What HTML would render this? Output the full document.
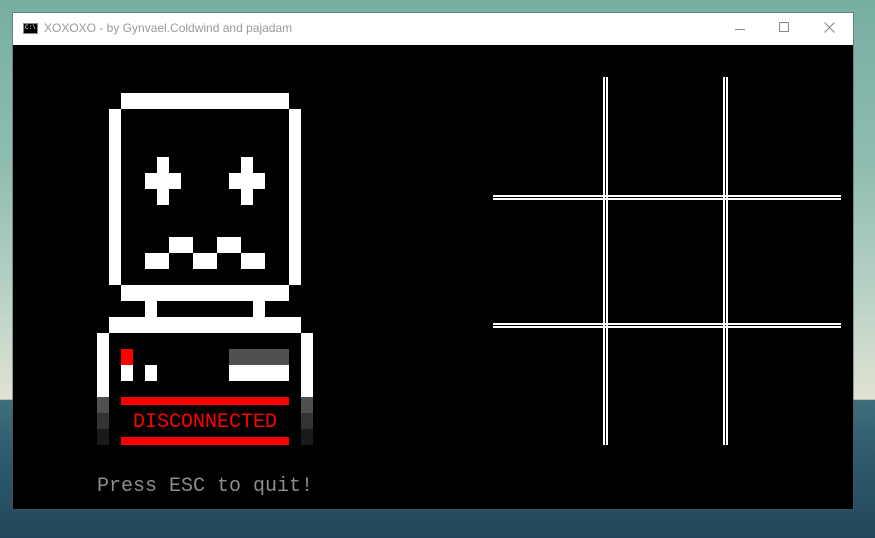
<!DOCTYPE html>
<html><head><meta charset="utf-8"><style>
html,body{margin:0;padding:0}
body{width:875px;height:538px;overflow:hidden;position:relative;
background:linear-gradient(to bottom,#78aea2 0%,#8fbcb0 30%,#b9d2c6 55%,#dfe2d2 73%,#e2e3d5 74.2%,#3f6f7c 74.4%,#2f5a6c 85%,#23475c 100%);font-family:"Liberation Sans",sans-serif}
.win{position:absolute;left:13px;top:13px;width:840px;height:496px;background:#000;box-shadow:0 0 0 1px rgba(80,80,80,.5)}
.tb{position:absolute;left:0;top:0;width:840px;height:32px;background:#fff}
.tb .t{position:absolute;left:31px;top:8px;font-size:12px;color:#999;}
.ico{position:absolute;left:10px;top:10px;width:15px;height:11px;background:#000;border:1px solid #888;box-sizing:border-box}
.ico:after{content:"C:\\";position:absolute;left:1px;top:0px;font-size:6px;color:#fff;font-family:"Liberation Mono",monospace;line-height:8px}
.r{position:absolute}
.w{background:#fff}
.mono{font-family:"Liberation Mono","DejaVu Sans Mono",monospace;position:absolute;white-space:pre}
</style></head><body>
<div class="win">
<div class="tb"><div class="ico"></div><div class="t">XOXOXO - by Gynvael.Coldwind and pajadam</div>
<div class="r" style="left:722px;top:16px;width:10px;height:1px;background:#888"></div>
<div class="r" style="left:766px;top:9px;width:8px;height:8px;border:1px solid #888"></div>
<svg class="r" style="left:811px;top:9px" width="11" height="11"><path d="M0.5 0.5L10.5 10.5M10.5 0.5L0.5 10.5" stroke="#888" stroke-width="1.1"/></svg>
</div>
</div>
<div class="r w" style="left:121px;top:93px;width:168px;height:16px"></div>
<div class="r w" style="left:109px;top:109px;width:12px;height:176px"></div>
<div class="r w" style="left:289px;top:109px;width:12px;height:176px"></div>
<div class="r w" style="left:121px;top:285px;width:168px;height:16px"></div>
<div class="r w" style="left:157px;top:157px;width:12px;height:48px"></div>
<div class="r w" style="left:145px;top:173px;width:36px;height:16px"></div>
<div class="r w" style="left:241px;top:157px;width:12px;height:48px"></div>
<div class="r w" style="left:229px;top:173px;width:36px;height:16px"></div>
<div class="r w" style="left:169px;top:237px;width:24px;height:16px"></div>
<div class="r w" style="left:217px;top:237px;width:24px;height:16px"></div>
<div class="r w" style="left:145px;top:253px;width:24px;height:16px"></div>
<div class="r w" style="left:193px;top:253px;width:24px;height:16px"></div>
<div class="r w" style="left:241px;top:253px;width:24px;height:16px"></div>
<div class="r w" style="left:145px;top:301px;width:12px;height:16px"></div>
<div class="r w" style="left:253px;top:301px;width:12px;height:16px"></div>
<div class="r w" style="left:109px;top:317px;width:192px;height:16px"></div>
<div class="r" style="left:97px;top:333px;width:12px;height:112px;background:linear-gradient(#fff 0 64px,#505050 64px 80px,#333 80px 96px,#1a1a1a 96px)"></div>
<div class="r" style="left:301px;top:333px;width:12px;height:112px;background:linear-gradient(#fff 0 64px,#505050 64px 80px,#333 80px 96px,#1a1a1a 96px)"></div>
<div class="r" style="left:121px;top:349px;width:12px;height:16px;background:#f00"></div>
<div class="r w" style="left:121px;top:365px;width:12px;height:16px"></div>
<div class="r w" style="left:145px;top:365px;width:12px;height:16px"></div>
<div class="r" style="left:229px;top:349px;width:60px;height:16px;background:#505050"></div>
<div class="r w" style="left:229px;top:365px;width:60px;height:16px"></div>
<div class="r" style="left:121px;top:397px;width:168px;height:8px;background:#f00"></div>
<div class="r" style="left:121px;top:437px;width:168px;height:8px;background:#f00"></div>
<div class="mono" style="left:133px;top:411px;font-size:20px;line-height:24px;color:#f00">DISCONNECTED</div>
<div class="mono" style="left:97px;top:475px;font-size:20px;line-height:24px;color:#8c8c8c">Press ESC to quit!</div>
<div class="r w" style="left:603px;top:77px;width:2px;height:368px"></div>
<div class="r w" style="left:606px;top:77px;width:2px;height:368px"></div>
<div class="r w" style="left:723px;top:77px;width:2px;height:368px"></div>
<div class="r w" style="left:726px;top:77px;width:2px;height:368px"></div>
<div class="r w" style="left:493px;top:195px;width:348px;height:2px"></div>
<div class="r w" style="left:493px;top:198px;width:348px;height:2px"></div>
<div class="r w" style="left:493px;top:323px;width:348px;height:2px"></div>
<div class="r w" style="left:493px;top:326px;width:348px;height:2px"></div>
</body></html>
